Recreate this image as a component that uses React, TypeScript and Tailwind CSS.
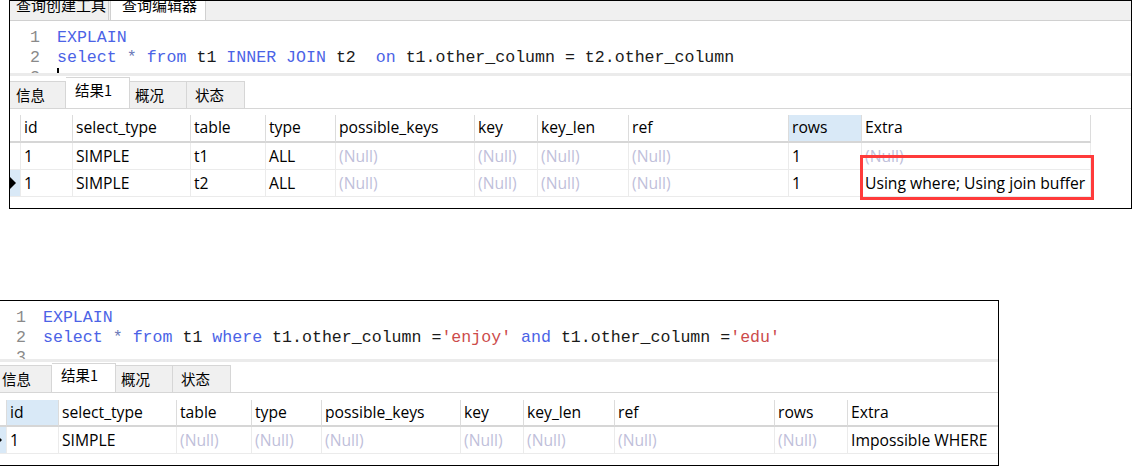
import React from "react";

type Seg = { t: string; c?: "kw" | "op" | "str" };
const N = null;

const segCls: Record<string, string> = {
  kw: "text-[#4b63e6]",
  op: "text-[#6b78b8]",
  str: "text-[#cc4b4b]",
  plain: "text-[#1a1a1a]",
};

const codeTop: Seg[][] = [
  [{ t: "EXPLAIN", c: "kw" }],
  [
    { t: "select", c: "kw" },
    { t: " " },
    { t: "*", c: "op" },
    { t: " " },
    { t: "from", c: "kw" },
    { t: " t1 " },
    { t: "INNER", c: "kw" },
    { t: " " },
    { t: "JOIN", c: "kw" },
    { t: " t2  " },
    { t: "on", c: "kw" },
    { t: " t1.other_column = t2.other_column" },
  ],
  [],
];

const codeBottom: Seg[][] = [
  [{ t: "EXPLAIN", c: "kw" }],
  [
    { t: "select", c: "kw" },
    { t: " " },
    { t: "*", c: "op" },
    { t: " " },
    { t: "from", c: "kw" },
    { t: " t1 " },
    { t: "where", c: "kw" },
    { t: " t1.other_column =" },
    { t: "'enjoy'", c: "str" },
    { t: " " },
    { t: "and", c: "kw" },
    { t: " t1.other_column =" },
    { t: "'edu'", c: "str" },
  ],
  [],
];

const headers = ["id", "select_type", "table", "type", "possible_keys", "key", "key_len", "ref", "rows", "Extra"];

const rowsTop: (string | null)[][] = [
  ["1", "SIMPLE", "t1", "ALL", N, N, N, N, "1", N],
  ["1", "SIMPLE", "t2", "ALL", N, N, N, N, "1", "Using where; Using join buffer"],
];
const rowsBottom: (string | null)[][] = [["1", "SIMPLE", N, N, N, N, N, N, N, "Impossible WHERE"]];

const sans = "font-['Open_Sans','Noto_Sans_CJK_SC',sans-serif]";
const cjk = "font-['Noto_Sans_CJK_SC','Noto_Sans',sans-serif]";
const mono = "font-['Liberation_Mono','Courier_New',monospace]";

function Editor({ lines, h, cursor }: { lines: Seg[][]; h: string; cursor?: boolean }) {
  return (
    <div className={`${h} overflow-hidden bg-white pt-[7px] ${mono} text-[16.6px] leading-[20px]`}>
      {lines.map((segs, i) => (
        <div key={i} className="flex h-[20px] whitespace-pre">
          <div className="w-[47px] pl-[20px] text-[#8a8a8a]">{i + 1}</div>
          <div className="flex">
            {segs.map((s, j) => (
              <span key={j} className={segCls[s.c ?? "plain"]}>
                {s.t}
              </span>
            ))}
            {cursor && i === 2 && <span className="h-[16px] w-[2px] bg-black" />}
          </div>
        </div>
      ))}
    </div>
  );
}

function ResultTabs({ barH, inH, actH }: { barH: string; inH: string; actH: string }) {
  const tabs = [
    { t: "信息", w: "w-[56px] pl-[6px]", a: false },
    { t: "结果1", w: "w-[64px] pl-[9px]", a: true },
    { t: "概况", w: "w-[57px] pl-[5px]", a: false },
    { t: "状态", w: "w-[58px] pl-[8px]", a: false },
  ];
  return (
    <div className={`${barH} flex items-end border-b border-[#d6d6d6] bg-white ${cjk} text-[14.5px] text-black`}>
      {tabs.map((tb) => (
        <div
          key={tb.t}
          className={`${tb.w} flex items-center border-t border-r border-[#d6d6d6] ${
            tb.a ? `${actH} bg-white pb-[6px]` : `${inH} bg-[#f0f0f0]`
          }`}
        >
          {tb.t}
        </div>
      ))}
    </div>
  );
}

function Grid({
  rows,
  hl,
  sel,
  headH,
}: {
  rows: (string | null)[][];
  hl: number;
  sel: number;
  headH: string;
}) {
  return (
    <div
      className={`grid grid-cols-[10px_52px_118px_75px_70px_139px_63px_91px_160px_73px_230px] ${sans} text-[15.7px] text-black`}
    >
      <div className={`${headH} border-b-2 border-[#d6d6d6]`} />
      {headers.map((h, i) => (
        <div
          key={h}
          className={`${headH} flex items-center overflow-hidden whitespace-nowrap border-b-2 border-l border-b-[#d6d6d6] border-l-[#dcdcdc] pl-[3px] ${
            i === hl ? "bg-[#d9e9f7]" : "bg-white"
          } ${i === headers.length - 1 ? "border-r border-r-[#dcdcdc]" : ""}`}
        >
          {h}
        </div>
      ))}
      {rows.map((r, ri) => (
        <React.Fragment key={ri}>
          <div
            className={`flex h-[27px] items-center border-b border-[#ebebeb] ${
              ri === sel ? "bg-[#d9e9f7]" : "bg-white"
            }`}
          >
            {ri === sel && (
              <div className="h-0 w-0 border-y-[6px] border-l-[6px] border-y-transparent border-l-black" />
            )}
          </div>
          {r.map((v, ci) => (
            <div
              key={ci}
              className={`flex h-[27px] items-center overflow-hidden whitespace-nowrap border-b border-l border-[#ebebeb] pl-[3px] pt-[1px] ${
                v === null ? "text-[#c0c0da]" : "text-black"
              } ${ci === r.length - 1 ? "border-r" : ""}`}
            >
              {v === null ? "(Null)" : v}
            </div>
          ))}
        </React.Fragment>
      ))}
    </div>
  );
}

export default function App() {
  return (
    <div className="relative h-[466px] w-[1134px] overflow-hidden bg-white">
      {/* Top panel */}
      <div className="ml-[9px] h-[209px] w-[1123px] overflow-hidden border border-black bg-white">
        <div className={`flex h-[20px] overflow-hidden border-b border-[#d0d0d0] bg-[#f0f0f0] ${cjk} text-[15px] leading-[16px] text-black`}>
          <div className="w-[99px] border-r border-[#d0d0d0] pl-[6px]">
            <div className="mt-[-4px]">查询创建工具</div>
          </div>
          <div className="ml-[1px] w-[96px] border-x border-[#d0d0d0] bg-white pl-[11px]">
            <div className="mt-[-4px]">查询编辑器</div>
          </div>
        </div>
        <Editor lines={codeTop} h="h-[52px]" cursor />
        <div className="h-[3px] bg-[#ebebeb]" />
        <ResultTabs barH="h-[33px]" inH="h-[27px]" actH="h-[31px]" />
        <div className="h-[6px]" />
        <Grid rows={rowsTop} hl={8} sel={1} headH="h-[28px]" />
      </div>

      {/* Bottom panel */}
      <div className="mt-[91px] h-[166px] w-[999px] overflow-hidden border-y border-r border-black bg-white">
        <div className="ml-[-4px]">
          <Editor lines={codeBottom} h="h-[58px]" />
          <div className="h-[3px] bg-[#ebebeb]" />
          <ResultTabs barH="h-[31px]" inH="h-[27px]" actH="h-[29px]" />
          <div className="h-[7px]" />
          <Grid rows={rowsBottom} hl={0} sel={0} headH="h-[27px]" />
        </div>
      </div>

      {/* Red highlight box */}
      <div className="absolute left-[860px] top-[155px] h-[45px] w-[234px] border-[3px] border-[#ff3b3b]" />
    </div>
  );
}
